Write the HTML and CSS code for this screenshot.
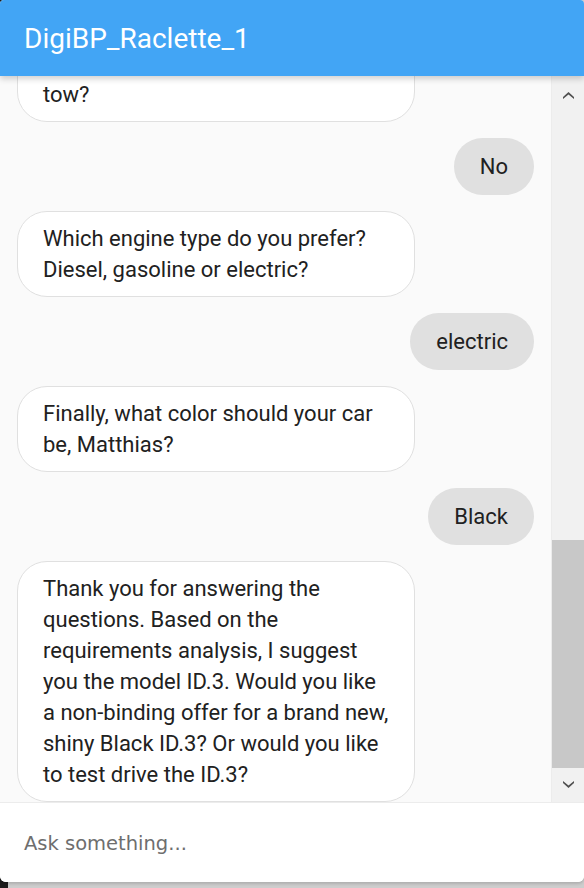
FILE: index.html
```html
<!DOCTYPE html>
<html lang="en">
<head>
<meta charset="utf-8">
<title>DigiBP_Raclette_1</title>
<link rel="stylesheet" href="styles.css">
</head>
<body>
<div class="card">
  <header class="header">DigiBP_Raclette_1</header>
  <div class="body">
    <div class="messages">
      <div class="msg bot">Would you like to use your car to pull a trailer or do you need it to tow?</div>
      <div class="msg user">No</div>
      <div class="msg bot">Which engine type do you prefer? Diesel, gasoline or electric?</div>
      <div class="msg user">electric</div>
      <div class="msg bot">Finally, what color should your car be, Matthias?</div>
      <div class="msg user">Black</div>
      <div class="msg bot">Thank you for answering the questions. Based on the requirements analysis, I suggest you the model ID.3. Would you like a non-binding offer for a brand new, shiny Black ID.3? Or would you like to test drive the ID.3?</div>
    </div>
    <div class="scrollbar">
      <div class="sb-btn sb-up">
        <svg width="11" height="7" viewBox="0 0 11 7"><polygon points="0,5 5.5,0 11,5 11,7 5.5,2.5 0,7" fill="#505050"/></svg>
      </div>
      <div class="sb-track"><div class="sb-thumb"></div></div>
      <div class="sb-btn sb-down">
        <svg width="11" height="7" viewBox="0 0 11 7"><polygon points="0,0 5.5,4.5 11,0 11,2 5.5,7 0,2" fill="#505050"/></svg>
      </div>
    </div>
  </div>
  <div class="composer">
    <div class="placeholder">Ask something...</div>
  </div>
</div>
</body>
</html>
```
FILE: styles.css
```css
html, body {
  margin: 0;
  padding: 0;
}
body {
  width: 584px;
  height: 888px;
  overflow: hidden;
  background: linear-gradient(to right, #1c1c1c 8px, #cdcdcd 8px);
}
.card {
  height: 882px;
  display: flex;
  flex-direction: column;
  background: #fafafa;
  border-radius: 4px 4px 6px 6px;
  overflow: hidden;
  box-shadow: 0 2px 3px rgba(0,0,0,0.15);
}
.header {
  position: relative;
  z-index: 2;
  flex: 0 0 76px;
  height: 76px;
  box-sizing: border-box;
  padding: 0 24px;
  display: flex;
  align-items: center;
  background: #42a5f5;
  color: #fff;
  font-family: Roboto, "Noto Sans", sans-serif;
  font-size: 28px;
  box-shadow: 0 3px 6px rgba(0,0,0,0.18);
}
.body {
  flex: 0 0 726px;
  height: 726px;
  display: flex;
  min-height: 0;
}
.messages {
  flex: 1;
  overflow: hidden;
  display: flex;
  flex-direction: column;
  justify-content: flex-end;
  gap: 16px;
  padding: 0 17px;
  font-family: Roboto, "Noto Sans", sans-serif;
  font-size: 22px;
  line-height: 31px;
  color: #212121;
}
.msg {
  flex: none;
  box-sizing: border-box;
}
.bot {
  align-self: flex-start;
  width: 398px;
  padding: 11px 25px;
  background: #fff;
  border: 1px solid #e0e0e0;
  border-radius: 30px;
}
.user {
  align-self: flex-end;
  padding: 13px 26px;
  background: #e0e0e0;
  border-radius: 29px;
}
.scrollbar {
  flex: 0 0 33px;
  display: flex;
  flex-direction: column;
  background: #f1f1f1;
  border-left: 1px solid #ececec;
  box-sizing: border-box;
}
.sb-btn {
  flex: 0 0 34px;
  display: flex;
  align-items: center;
  justify-content: center;
  box-sizing: border-box;
}
.sb-up {
  align-items: flex-end;
  padding-bottom: 11px;
}
.sb-down {
  align-items: flex-start;
  padding-top: 13px;
}
.sb-track {
  flex: 1;
  display: flex;
  flex-direction: column;
  justify-content: flex-end;
}
.sb-thumb {
  height: 228px;
  background: #c8c8c8;
}
.composer {
  flex: 1;
  background: #fff;
  border-top: 1px solid #ececec;
  display: flex;
  align-items: center;
  padding: 0 24px;
}
.placeholder {
  font-family: "DejaVu Sans", Verdana, sans-serif;
  font-size: 19.5px;
  color: #6e6e6e;
  margin-top: 2px;
}
```
